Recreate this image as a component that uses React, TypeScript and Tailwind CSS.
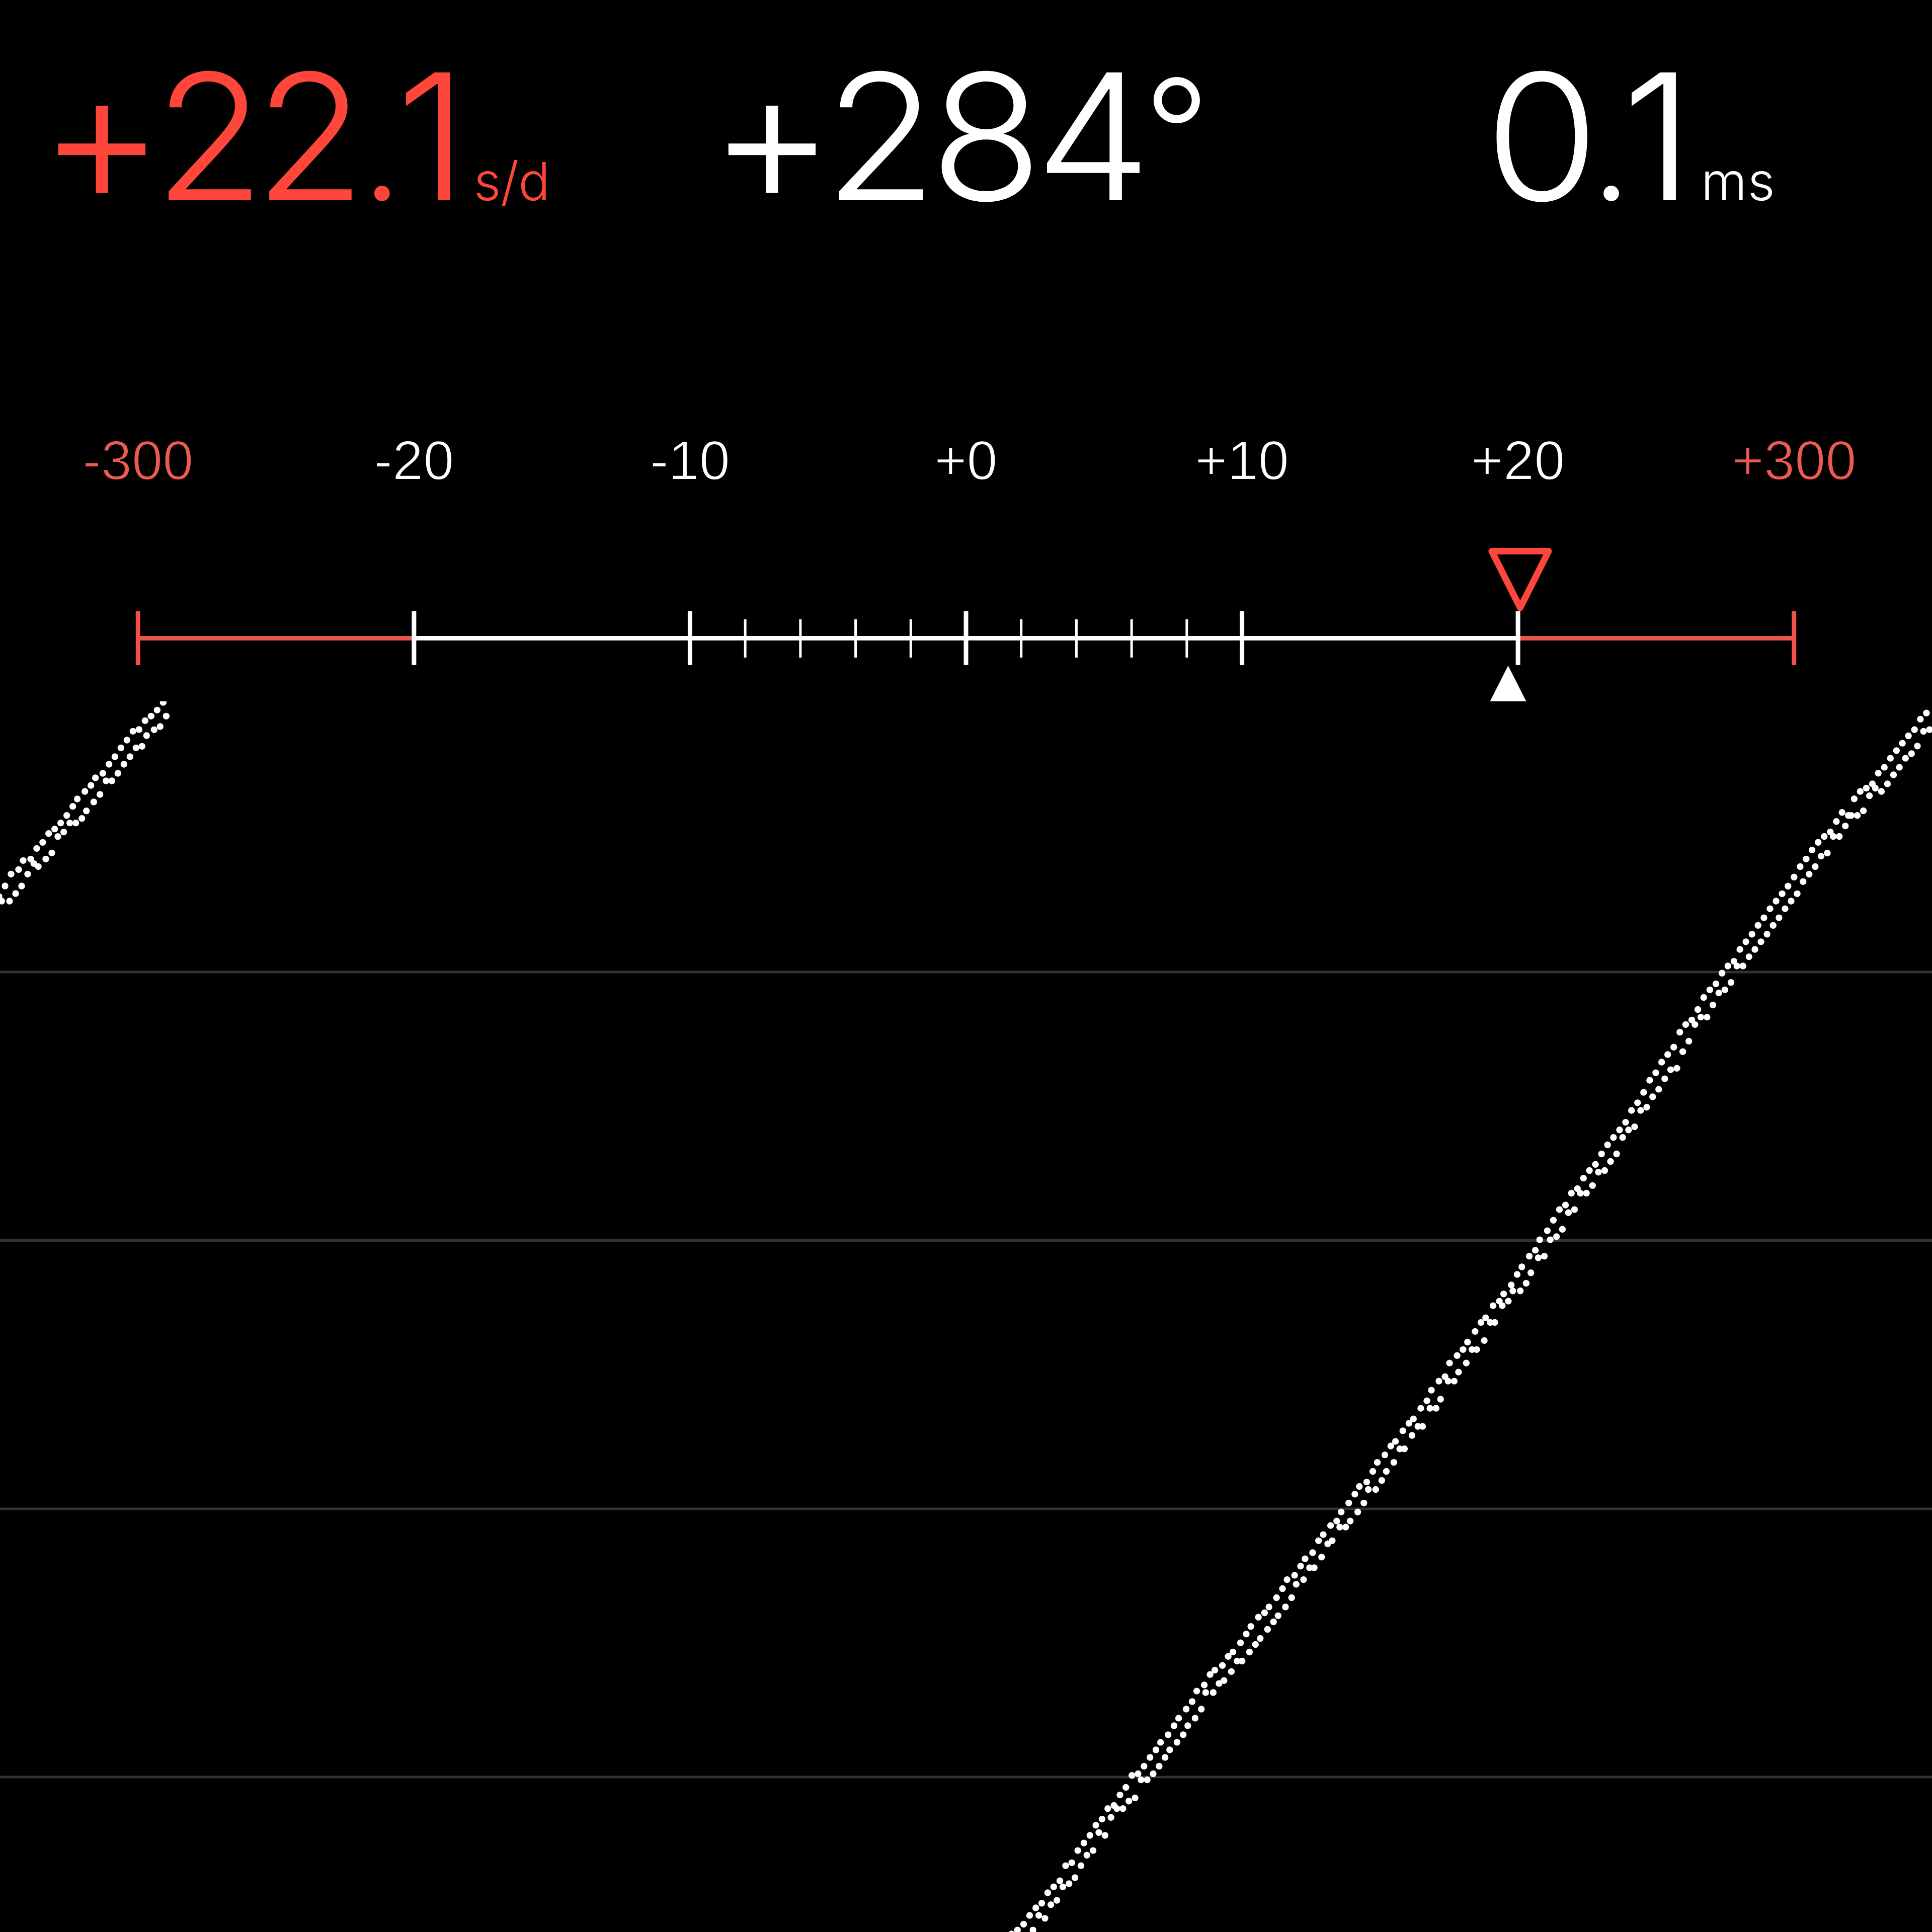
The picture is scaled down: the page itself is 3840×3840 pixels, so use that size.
import React from 'react';

type Segment = {
  x: number;
  y: number;
  sx: number;
  sy: number;
  points: number[][];
};

// each chunk of the trace keeps its own origin and scale
const segments: Segment[] = [
  {
    x: 0, y: 1360, sx: 3, sy: 3,
    points: [
      [973, 108], [937, 154], [901, 190], [865, 217], [829, 270], [793, 280], [757, 333], [721, 379],
      [685, 432], [650, 477], [613, 531], [569, 558], [542, 603], [506, 639], [461, 684], [434, 728],
      [398, 782], [362, 827], [326, 863], [290, 890], [255, 943], [219, 979], [183, 1042], [138, 1051],
      [111, 1105], [66, 1132], [30, 1203], [-6, 1266],
      [991, 190], [955, 252], [919, 271], [874, 306], [847, 370], [811, 379], [775, 432], [739, 477],
      [703, 531], [667, 576], [632, 576], [596, 657], [559, 702], [515, 755], [488, 800], [452, 827],
      [416, 827], [380, 881], [345, 908], [309, 1006], [273, 1042], [228, 1087], [202, 1069], [165, 1132],
      [129, 1203], [93, 1248], [57, 1293], [10, 1293],
    ],
  },
  {
    x: 3300, y: 1380, sx: 2.904, sy: 2.45,
    points: [
      [1536, 91], [1501, 121], [1467, 172], [1432, 202], [1397, 238], [1363, 274], [1328, 311], [1293, 355],
      [1258, 384], [1224, 436], [1189, 457], [1154, 473], [1119, 509], [1085, 590], [1049, 575], [1016, 619],
      [981, 670], [946, 692], [911, 721], [876, 758], [842, 802], [807, 839], [772, 890], [737, 934],
      [703, 971], [668, 1007], [633, 1044], [598, 1088], [564, 1125], [529, 1168], [494, 1205], [459, 1242],
      [425, 1300], [390, 1323], [356, 1358], [321, 1410],
      [1554, 172], [1519, 180], [1484, 252], [1450, 289], [1415, 311], [1380, 355], [1346, 392], [1311, 436],
      [1276, 473], [1241, 457], [1207, 494], [1172, 567], [1137, 590], [1102, 590], [1068, 641], [1033, 692],
      [998, 692], [964, 773], [928, 788], [894, 839], [859, 876], [824, 912], [790, 971], [755, 1007],
      [720, 1044], [685, 1088], [651, 1125], [616, 1168], [581, 1205], [546, 1242], [512, 1278], [477, 1323],
      [442, 1323], [408, 1403],
    ],
  },
  {
    x: 2960, y: 1960, sx: 2.904, sy: 2.45,
    points: [
      [1273, 18], [1238, 55], [1204, 114], [1169, 165], [1134, 187], [1100, 224], [1065, 297], [1030, 333],
      [995, 370], [961, 422], [926, 458], [891, 517], [856, 568], [821, 605], [787, 663], [752, 700],
      [717, 737], [683, 773], [648, 817], [613, 868], [578, 898], [544, 935], [509, 986], [474, 1008],
      [440, 1066], [405, 1088], [370, 1140], [335, 1191], [291, 1235], [266, 1286], [231, 1315], [188, 1367],
      [161, 1404], [127, 1455], [83, 1499], [58, 1534], [22, 1556],
      [1360, 18], [1325, 33], [1291, 92], [1257, 151], [1221, 151], [1187, 187], [1152, 268], [1117, 319],
      [1083, 400], [1047, 407], [1013, 451], [978, 502], [943, 539], [909, 590], [874, 605], [839, 685],
      [804, 700], [770, 737], [735, 817], [700, 854], [666, 898], [630, 906], [596, 971], [561, 1008],
      [526, 1008], [492, 1088], [457, 1103], [422, 1184], [388, 1220], [352, 1235], [318, 1315], [283, 1323],
      [240, 1396], [213, 1447], [179, 1484], [136, 1484], [110, 1534], [75, 1556],
    ],
  },
  {
    x: 2500, y: 2540, sx: 2.8, sy: 2.6133,
    points: [
      [1268, 207], [1242, 231], [1209, 278], [1167, 333], [1142, 372], [1109, 403], [1067, 442], [1042, 513],
      [1008, 536], [966, 583], [941, 638], [907, 677], [866, 732], [841, 755], [807, 794], [766, 849],
      [740, 873], [707, 919], [665, 958], [640, 1005], [606, 1060], [565, 1083], [540, 1123], [506, 1169],
      [464, 1216], [439, 1263], [405, 1286], [364, 1333], [338, 1365], [305, 1427], [263, 1459], [238, 1497],
      [1319, 231], [1293, 231], [1260, 325], [1218, 372], [1192, 372], [1160, 442], [1117, 489], [1093, 536],
      [1059, 536], [1017, 630], [992, 677], [958, 677], [917, 771], [891, 771], [858, 818], [816, 888],
      [790, 888], [757, 958], [715, 1005], [690, 1052], [656, 1099], [615, 1099], [590, 1169], [556, 1216],
      [514, 1263], [489, 1294], [456, 1294], [414, 1365], [389, 1381], [355, 1450], [314, 1505], [288, 1505],
    ],
  },
  {
    x: 1980, y: 3080, sx: 2.529, sy: 2.0632,
    points: [
      [1500, 105], [1462, 123], [1439, 160], [1409, 197], [1371, 235], [1349, 259], [1318, 277], [1280, 315],
      [1257, 346], [1228, 382], [1190, 420], [1166, 438], [1137, 475], [1099, 494], [1075, 512], [1046, 555],
      [1008, 580], [985, 623], [955, 654], [917, 691], [894, 722], [864, 759], [826, 790], [803, 821],
      [773, 852], [743, 888], [713, 919], [682, 926], [652, 975], [622, 1006], [592, 1049], [561, 1062],
      [532, 1105], [501, 1130], [471, 1172], [441, 1203], [410, 1234], [380, 1284], [349, 1296], [320, 1358],
      [289, 1383], [259, 1407], [229, 1450], [199, 1469], [168, 1500], [138, 1536], [107, 1560], [77, 1576],
      [1545, 123], [1508, 142], [1485, 197], [1454, 235], [1417, 271], [1394, 296], [1364, 327], [1327, 364],
      [1303, 389], [1273, 420], [1236, 457], [1211, 457], [1182, 500], [1145, 537], [1120, 549], [1091, 586],
      [1053, 586], [1031, 654], [1000, 691], [963, 722], [940, 759], [909, 790], [872, 821], [849, 852],
      [819, 888], [789, 919], [759, 944], [728, 944], [698, 1018], [667, 1031], [637, 1062], [607, 1062],
      [577, 1098], [547, 1172], [516, 1160], [487, 1234], [456, 1253], [426, 1296], [396, 1345], [366, 1370],
      [335, 1383], [305, 1438], [275, 1456], [245, 1512], [214, 1500], [185, 1560],
    ],
  },
];

const dots = segments.flatMap((s) =>
  s.points.map(([px, py]) => ({ cx: s.x + px / s.sx, cy: s.y + py / s.sy - 1394 }))
);

const labels = ['-300', '-20', '-10', '+0', '+10', '+20', '+300'];
const gridLines = [538, 1071.5, 1605, 2138];
const minorTicks = [-4, -3, -2, -1, 1, 2, 3, 4];
const step = 3840 / 7;

const Readouts: React.FC = () => {
  return (
    <header className="flex h-[820px] whitespace-nowrap font-['Inter'] font-light text-[349px] leading-[542px] text-white [font-optical-sizing:none] [font-variation-settings:'opsz'_14]">
      <div className="w-[1400px] pl-[77px] text-[#ff463b]">
        <span className="relative top-[8px] text-[384px] leading-none tracking-[-22px]">+</span>
        <span className="inline-block origin-left scale-x-[1.03] tracking-[-20px]">22</span>
        <span className="ml-[24px] text-[290px] leading-none tracking-[-13px]">.</span>
        <span className="inline-block origin-left scale-x-[1.04]">1</span>
        <span className="ml-[17px] text-[105px] tracking-[-1px]">s/d</span>
      </div>
      <div className="w-[1520px] pl-[9px]">
        <span className="relative top-[8px] text-[384px] leading-none tracking-[-22px]">+</span>
        <span className="inline-block origin-left scale-x-[1.05] tracking-[-14px]">284</span>
        <span className="relative top-[-32px] ml-[30px] text-[290px] font-[340] leading-none">°</span>
      </div>
      <div className="pl-[31px]">
        <span className="inline-block origin-left scale-x-[1.055] tracking-[-20px]">0</span>
        <span className="ml-[15px] text-[290px] leading-none tracking-[-20px]">.</span>
        <span className="inline-block origin-left scale-x-[1.04]">1</span>
        <span className="ml-[20px] text-[105px] tracking-[1px]">ms</span>
      </div>
    </header>
  );
};

const RateScale: React.FC = () => {
  return (
    <section className="relative h-[574px]">
      <div className="grid grid-cols-7 text-center font-['Liberation_Sans'] text-[110px] leading-[190px] text-white [-webkit-text-stroke:2px_black]">
        {labels.map((label) => (
          <span key={label} className={label.includes('300') ? 'text-[#ee5a50]' : ''}>
            {label}
          </span>
        ))}
      </div>
      <svg className="absolute inset-0" width="3840" height="574" viewBox="0 0 3840 574">
        <path d={`M${step / 2} 448.5H${step * 1.5}M${step * 5.5} 448.5H${step * 6.5}`} stroke="#e9574c" strokeWidth="9" />
        <path d={`M${step * 1.5} 448.5H${step * 5.5}`} stroke="#fff" strokeWidth="9" />
        {labels.map((label, i) => (
          <path
            key={label}
            d={`M${step * (i + 0.5)} 395V502`}
            stroke={label.includes('300') ? '#f4514a' : '#fff'}
            strokeWidth="9"
          />
        ))}
        {minorTicks.map((i) => (
          <path key={i} d={`M${1920 + (i * step) / 5} 411V487`} stroke="#fff" strokeWidth="5" />
        ))}
        <path d="M2965 275.5H3078L3021.5 388Z" fill="none" stroke="#ff463b" strokeWidth="13" strokeLinejoin="round" />
        <path d="M2997.5 503L3033.5 574H2961.5Z" fill="#fff" />
      </svg>
    </section>
  );
};

const Trace: React.FC = () => {
  return (
    <svg className="block" width="3840" height="2446" viewBox="0 0 3840 2446">
      {gridLines.map((y) => (
        <path key={y} d={`M0 ${y}H3840`} stroke="#333" strokeWidth="5" />
      ))}
      {dots.map((d, i) => (
        <circle key={i} cx={d.cx} cy={d.cy} r="6.7" fill="#fff" />
      ))}
    </svg>
  );
};

const App: React.FC = () => {
  return (
    <main className="h-[3840px] w-[3840px] overflow-hidden bg-black">
      <Readouts />
      <RateScale />
      <Trace />
    </main>
  );
};

export default App;
